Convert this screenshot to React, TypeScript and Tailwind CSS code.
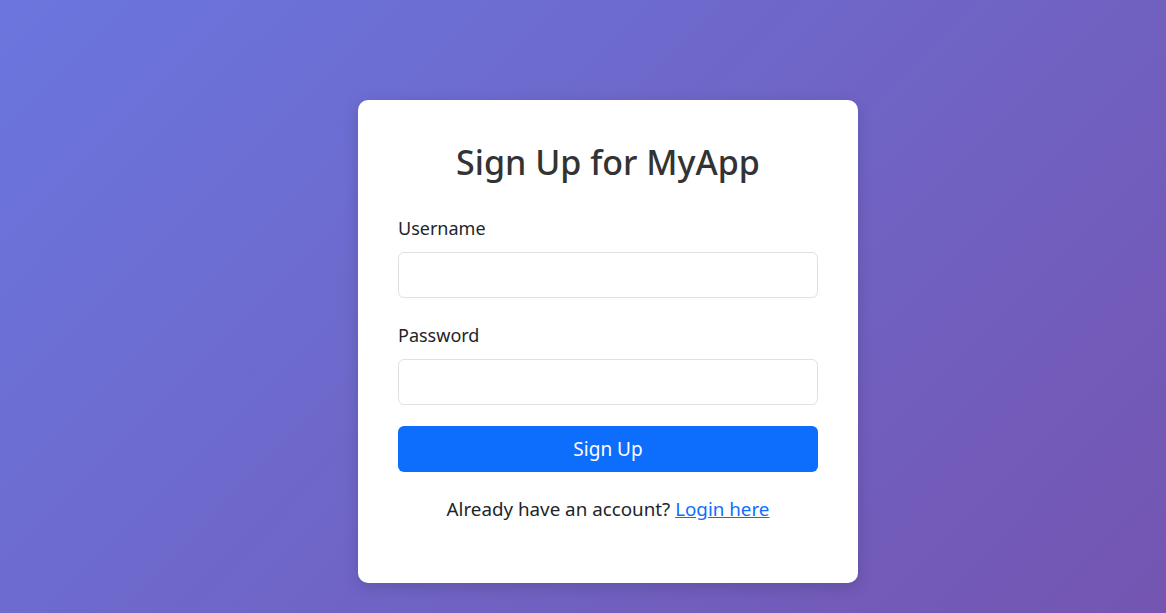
import React from "react";

const App: React.FC = () => {
  return (
    <div
      className="min-h-screen w-full bg-[linear-gradient(135deg,#6a76de_0%,#7455b1_100%)] flex justify-center pt-[100px] pl-[50px]"
      style={{ fontFamily: '"Noto Sans", "Open Sans", sans-serif' }}
    >
      <div className="w-[500px] h-fit bg-white rounded-[10px] shadow-[0_4px_16px_rgba(0,0,0,0.15)] px-10 pt-[40px] pb-[60px]">
        <h2 className="text-center text-[34px] leading-[44px] font-medium text-[#333333] mb-[30px]">
          Sign Up for MyApp
        </h2>
        <form onSubmit={(e) => e.preventDefault()}>
          <div className="mb-[23px]">
            <label className="block text-[18px] leading-[28px] text-[#212529] mb-[10px]">
              Username
            </label>
            <input
              type="text"
              className="block w-full h-[46px] border border-[#dee2e6] rounded-[6px] px-3 text-[18px] outline-none"
            />
          </div>
          <div className="mb-[21px]">
            <label className="block text-[18px] leading-[28px] text-[#212529] mb-[10px]">
              Password
            </label>
            <input
              type="password"
              className="block w-full h-[46px] border border-[#dee2e6] rounded-[6px] px-3 text-[18px] outline-none"
            />
          </div>
          <button
            type="submit"
            className="w-full h-[46px] bg-[#0d6efd] text-white text-[19px] rounded-[6px]"
          >
            Sign Up
          </button>
        </form>
        <p className="text-center text-[18.8px] leading-[28px] text-[#212529] mt-[23px]">
          Already have an account?{" "}
          <a href="#" className="text-[#0d6efd] underline">
            Login here
          </a>
        </p>
      </div>
    </div>
  );
};

export default App;
